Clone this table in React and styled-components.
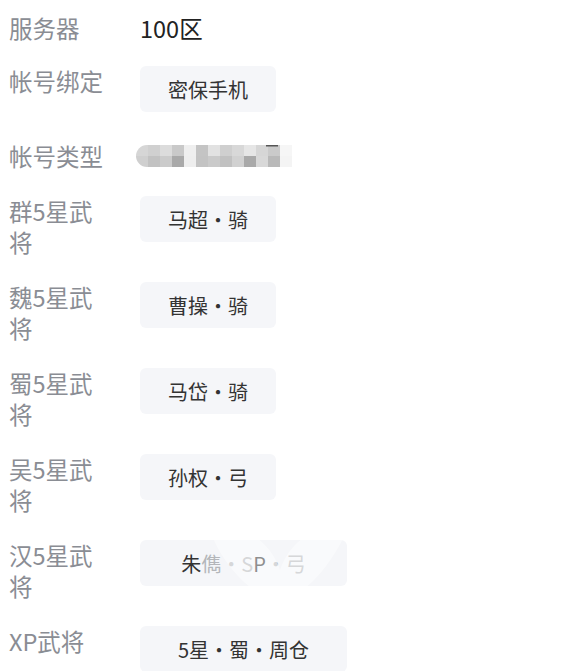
import React from "react";
import styled, { createGlobalStyle } from "styled-components";

const GlobalStyle = createGlobalStyle`
  body {
    margin: 0;
    background: #ffffff;
    font-family: "Noto Sans CJK SC", "Noto Sans", sans-serif;
  }
`;

const rows = [
  { label: "服务器", text: "100区", kind: "plain", space: 22 },
  { label: "帐号绑定", text: "密保手机", kind: "tag", space: 29 },
  { label: "帐号类型", kind: "blur" },
  { label: "群5星武将", text: "马超・骑", kind: "tag" },
  { label: "魏5星武将", text: "曹操・骑", kind: "tag" },
  { label: "蜀5星武将", text: "马岱・骑", kind: "tag" },
  { label: "吴5星武将", text: "孙权・弓", kind: "tag" },
  { label: "汉5星武将", kind: "mark" },
  { label: "XP武将", text: "5星・蜀・周仓", kind: "tag", wide: true },
];

// mosaic colours, top row then bottom row
const topCells = ["#d6d6d6", "#d0d0d0", "#dcdcdc", "#c9c9c9", "#efefef", "#c4c4c4", "#e2e2e2", "#cfcfcf", "#d8d8d8", "#e6e6e6", "#d6d6d6", "#cacaca", "#f6f6f6"];
const bottomCells = ["#cfcfcf", "#c2c2c2", "#cbcbcb", "#a9a9a9", "#eeeeee", "#c3c3c3", "#cacaca", "#c1c1c1", "#d1d1d1", "#a9a9a9", "#d8d8d8", "#b9b9b9", "#f4f4f4"];

const App = () => {
  return (
    <Page>
      <GlobalStyle />
      {rows.map((row) => (
        <Row key={row.label} $space={row.space}>
          <Label>{row.label}</Label>
          {row.kind === "plain" && <Plain>{row.text}</Plain>}
          {row.kind === "tag" && <Tag $wide={row.wide}>{row.text}</Tag>}
          {row.kind === "blur" && <Mosaic />}
          {row.kind === "mark" && (
            <Tag $wide>
              <span>朱</span>
              <Faded>儁・S</Faded>
              <span>P</span>
              <Faded>・弓</Faded>
              <Watermark viewBox="0 0 150 140">
                <path d="M10 10 C40 0 70 20 80 50 C90 20 120 0 145 15 C130 45 110 70 85 80 C110 95 125 120 120 140 L30 140 C35 115 55 95 75 82 C45 70 20 40 10 10 Z" />
              </Watermark>
            </Tag>
          )}
        </Row>
      ))}
    </Page>
  );
};

const Mosaic = () => (
  <MosaicSvg width="160" height="26" viewBox="0 0 160 26">
    <defs>
      <clipPath id="pill">
        <rect x="0" y="2" width="158" height="22" rx="11" />
        <rect x="12" y="2" width="146" height="22" />
      </clipPath>
    </defs>
    <g clipPath="url(#pill)">
      {topCells.map((c, i) => (
        <rect key={"t" + i} x={i * 12} y="2" width="12" height="11" fill={c} />
      ))}
      {bottomCells.map((c, i) => (
        <rect key={"b" + i} x={i * 12} y="13" width="12" height="11" fill={c} />
      ))}
      <rect x="130" y="2" width="12" height="1.5" fill="#555" />
    </g>
  </MosaicSvg>
);

const Page = styled.div`
  padding: 13px 0 0 9px;
`;

const Row = styled.div`
  display: grid;
  grid-template-columns: 104px auto;
  column-gap: 27px;
  align-items: start;
  margin-bottom: ${(p) => p.$space || 24}px;
`;

const Label = styled.div`
  font-size: 23.5px;
  line-height: 31px;
  color: #8a8d94;
  word-break: break-all;
`;

const Plain = styled.div`
  font-size: 23.5px;
  line-height: 31px;
  color: #222222;
`;

const Tag = styled.div`
  position: relative;
  overflow: hidden;
  width: ${(p) => (p.$wide ? 207 : 136)}px;
  height: 46px;
  display: flex;
  align-items: center;
  justify-content: center;
  border-radius: 6px;
  background: #f5f6f9;
  color: #333333;
  font-size: 20px;
  white-space: nowrap;
`;

const Faded = styled.span`
  color: #b4b6ba;
`;

const Watermark = styled.svg`
  position: absolute;
  left: 60px;
  top: -20px;
  width: 150px;
  height: 140px;
  fill: rgba(255, 255, 255, 0.45);
  pointer-events: none;
`;

const MosaicSvg = styled.svg`
  display: block;
  margin: 2px 0 0 -4px;
  filter: blur(0.5px);
`;

export default App;
